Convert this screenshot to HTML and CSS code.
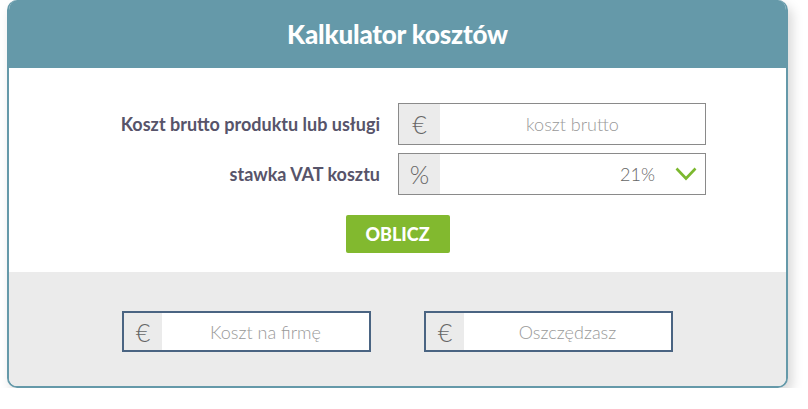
FILE: index.html
```html
<!doctype html>
<html>
<head>
	<meta charset="utf-8">
	<title>Kalkulator kosztów</title>
	<link rel="stylesheet" href="styles.css">
</head>
<body>
	<main class="calc">
		<header class="calc-head">
			<h1>Kalkulator kosztów</h1>
		</header>
		<section class="calc-form">
			<label class="row-label" for="gross">Koszt brutto produktu lub usługi</label>
			<div class="field">
				<span class="prefix">€</span>
				<input id="gross" type="text" placeholder="koszt brutto">
			</div>
			<label class="row-label" for="vat">stawka VAT kosztu</label>
			<div class="field">
				<span class="prefix">%</span>
				<div class="select" id="vat">
					<span class="select-value">21%</span>
					<svg class="chevron" width="22" height="14" viewBox="0 0 22 14">
						<path d="M1.5 1.5 L11 11.5 L20.5 1.5" fill="none" stroke="#7cb82f" stroke-width="2.6"/>
					</svg>
				</div>
			</div>
			<div class="actions">
				<button class="btn">OBLICZ</button>
			</div>
		</section>
		<section class="calc-result">
			<div class="field field-result">
				<span class="prefix">€</span>
				<input type="text" placeholder="Koszt na firmę">
			</div>
			<div class="field field-result">
				<span class="prefix">€</span>
				<input type="text" placeholder="Oszczędzasz">
			</div>
		</section>
	</main>
</body>
</html>
```

FILE: styles.css
```css
body {
	margin: 0;
	background: white;
	font-family: Lato, "Open Sans", sans-serif;
}

.calc {
	margin-left: 7px;
	width: 781px;
	box-sizing: border-box;
	border: 2px solid #6599a9;
	border-top: 0;
	border-radius: 10px;
	overflow: hidden;
	box-shadow: 4px 6px 12px rgba(0, 0, 0, 0.16);
}

.calc-head {
	height: 68px;
	background: #6599a9;
	display: flex;
	align-items: center;
	justify-content: center;
}

.calc-head h1 {
	margin: 0;
	color: white;
	font-size: 26px;
	font-weight: 900;
	letter-spacing: -0.2px;
}

.calc-form {
	background: white;
	display: grid;
	grid-template-columns: 1fr 308px;
	column-gap: 18px;
	row-gap: 8px;
	padding: 35px 80px 19px 0;
}

.row-label {
	text-align: right;
	align-self: center;
	font-size: 18px;
	font-weight: 700;
	color: #57546a;
}

.field {
	display: flex;
	height: 42px;
	box-sizing: border-box;
	border: 1px solid #8a8a8a;
	background: white;
}

.prefix {
	width: 41px;
	flex: none;
	background: #ebebeb;
	color: #666;
	font-size: 25px;
	font-weight: 300;
	display: flex;
	align-items: center;
	justify-content: center;
}

.field input {
	flex: 1;
	min-width: 0;
	border: 0;
	outline: 0;
	text-align: center;
	font-family: inherit;
	font-size: 18px;
	font-weight: 300;
	color: #555;
	background: white;
}

.field input::placeholder {
	color: #999;
}

.select {
	flex: 1;
	display: flex;
	align-items: center;
	justify-content: flex-end;
	padding-right: 8px;
	gap: 20px;
}

.select-value {
	font-size: 18px;
	font-weight: 300;
	color: #666;
}

.chevron {
	display: block;
}

.actions {
	grid-column: 1 / -1;
	display: flex;
	justify-content: center;
	padding-left: 80px;
	margin-top: 12px;
}

.btn {
	width: 104px;
	height: 38px;
	border: 0;
	border-radius: 2px;
	background: #82b92f;
	color: white;
	font-family: inherit;
	font-size: 18px;
	font-weight: 900;
}

.calc-result {
	background: #ebebeb;
	display: flex;
	justify-content: center;
	gap: 53px;
	padding: 39px 0 34px;
}

.field-result {
	width: 249px;
	height: 41px;
	border: 2px solid #4a6482;
}

.field-result .prefix {
	width: 38px;
}
```
